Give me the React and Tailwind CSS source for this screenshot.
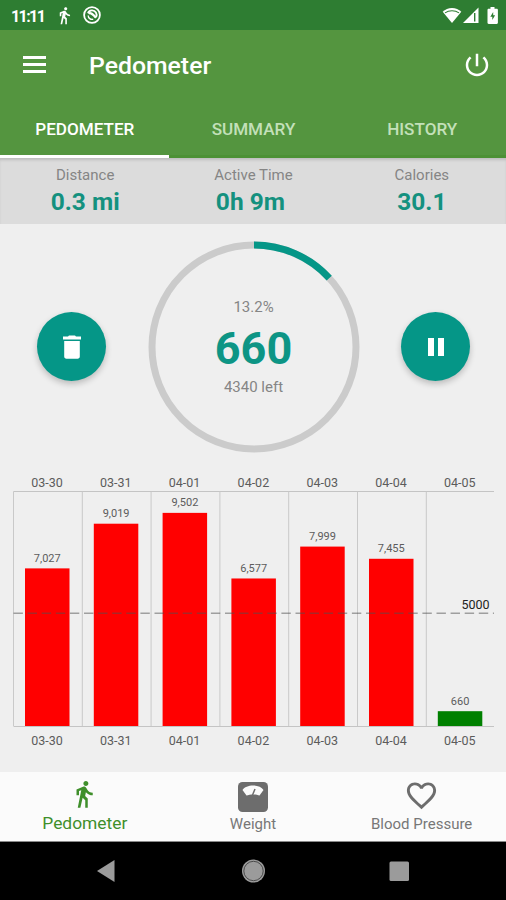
import { useState } from "react";

const tabs = ["PEDOMETER", "SUMMARY", "HISTORY"];

const stats = [
  { label: "Distance", value: "0.3 mi" },
  { label: "Active Time", value: "0h 9m " },
  { label: "Calories", value: "30.1" },
];

const days = [
  { date: "03-30", steps: 7027 },
  { date: "03-31", steps: 9019 },
  { date: "04-01", steps: 9502 },
  { date: "04-02", steps: 6577 },
  { date: "04-03", steps: 7999 },
  { date: "04-04", steps: 7455 },
  { date: "04-05", steps: 660 },
];

const GOAL = 5000;
const WALK =
  "M13.5 5.5c1.1 0 2-.9 2-2s-.9-2-2-2-2 .9-2 2 .9 2 2 2zM9.8 8.9L7 23h2.1l1.8-8 2.1 2v6h2v-7.5l-2.1-2 .6-3C14.8 12 16.8 13 19 13v-2c-1.9 0-3.5-1-4.3-2.4l-1-1.6c-.4-.6-1-1-1.7-1-.3 0-.5.1-.8.1L6 8.3V13h2V9.6l1.8-.7";

function Icon({ d, className }) {
  return (
    <svg viewBox="0 0 24 24" fill="currentColor" className={className}>
      <path d={d} />
    </svg>
  );
}

function StatusBar() {
  return (
    <div className="flex h-[30px] shrink-0 items-center bg-[#2e7d32] pl-[11px] pr-[7px] text-white">
      <span className="w-[44px] pt-[3px] text-[16px] font-bold tracking-[-1.6px]">11:11</span>
      <Icon d={WALK} className="h-[19px] w-[19px]" />
      <svg viewBox="0 0 18 18" className="ml-[9px] h-[18px] w-[18px]" fill="none" stroke="currentColor">
        <circle cx="9" cy="9" r="7.9" strokeWidth="1.8" />
        <path d="M5 7.300C6.200 3.700 11 3.400 12.900 6.500c.9 1.500.9 3.200.2 4.500" strokeWidth="1.900" />
        <path d="M5.200 9.500c0 2.700 2.500 4.300 5 3.700" strokeWidth="1.400" />
        <path d="M5.500 7.500c2.500-1.500 4.500 1 7.500 4.300" strokeWidth="2.200" />
      </svg>
      <div className="flex-1" />
      <svg viewBox="0 0 20 16" className="h-[16px] w-[20px]" fill="currentColor">
        <path d="M10 16L.7 4.7C3.2 2.4 6.4 1 10 1s6.800 1.400 9.300 3.700z" />
        <path d="M3 5.900C7 3 13 3 17 5.900" fill="none" stroke="#2e7d32" strokeWidth="1.100" />
      </svg>
      <svg viewBox="0 0 17 16" className="h-[16px] w-[17px]" fill="currentColor">
        <path d="M1 16L16.500.5V16z" />
        <path d="M12.700 6v8.500" stroke="#2e7d32" strokeWidth="1.400" />
      </svg>
      <svg viewBox="0 0 12 17" className="ml-[8px] h-[17px] w-[12px]" fill="currentColor">
        <path d="M3.500 0h4v1.700h2.200c.7 0 1.200.5 1.200 1.200v12.800c0 .7-.5 1.200-1.200 1.200H1.700c-.7 0-1.200-.5-1.200-1.200V2.900c0-.7.5-1.200 1.200-1.200h1.800z" />
        <path d="M6.200 5L3.300 9.700h2V13l2.800-4.700h-1.900z" fill="#2e7d32" />
      </svg>
    </div>
  );
}

function Header() {
  return (
    <div className="flex h-[70px] shrink-0 items-center bg-[#54953f] pl-[23px] pr-[14px] text-white">
      <div className="flex w-[23px] flex-col gap-[4px] pb-[1px]">
        <div className="h-[3px] bg-white" />
        <div className="h-[3px] bg-white" />
        <div className="h-[3px] bg-white" />
      </div>
      <div className="ml-[43px] flex-1 pt-[1px] text-[24.8px] font-medium">Pedometer</div>
      <Icon
        d="M13 3h-2v10h2V3zm4.830 2.170l-1.420 1.420C17.990 7.860 19 9.810 19 12c0 3.870-3.130 7-7 7s-7-3.130-7-7c0-2.190 1.010-4.140 2.580-5.420L6.170 5.170C4.230 6.820 3 9.260 3 12c0 4.970 4.030 9 9 9s9-4.030 9-9c0-2.740-1.230-5.180-3.170-6.830z"
        className="h-[30px] w-[30px]"
      />
    </div>
  );
}

function StepRing({ steps }) {
  const percent = (steps / GOAL) * 100;
  return (
    <div className="relative h-[212px] w-[212px]">
      <svg viewBox="0 0 212 212" className="h-full w-full -rotate-90" fill="none" strokeWidth="7">
        <circle cx="106" cy="106" r="102" stroke="#cbcbcb" />
        <circle
          cx="106"
          cy="106"
          r="102"
          stroke="#059687"
          pathLength="100"
          strokeDasharray={`${percent} 100`}
        />
      </svg>
      <div className="absolute inset-0 flex flex-col items-center justify-center pt-[1px] text-[#858585]">
        <div className="text-[15px] leading-[20px]">{percent.toFixed(1)}%</div>
        <div className="mb-[4px] mt-[8px] text-[45px] font-bold leading-[48px] text-[#0d9585]">{steps}</div>
        <div className="text-[15px] leading-[20px]">{GOAL - steps} left</div>
      </div>
    </div>
  );
}

function RoundButton({ children }) {
  return (
    <button className="flex h-[69px] w-[69px] items-center justify-center rounded-full bg-[#059687] text-white shadow-[0_3px_6px_rgba(0,0,0,0.22)]">
      {children}
    </button>
  );
}

function StepChart() {
  const left = 13.5;
  const step = 68.8;
  const top = 18.5;
  const bottom = 253;
  const scale = 0.02243;
  const goalY = bottom - GOAL * scale - 0.5;

  return (
    <svg width="506" height="299" viewBox="0 0 506 299" className="block shrink-0">
      <path d={`M${left} ${top}H494M${left} ${bottom + 0.5}H494`} stroke="#c4c4c4" />
      {days.map((day, i) => {
        const x = left + i * step;
        const y = bottom - day.steps * scale;
        return (
          <g key={day.date} textAnchor="middle" fill="#5c5c5c">
            <path d={`M${x} ${top}V${bottom}`} stroke="#c9c9c9" />
            <text x={x + 33.5} y="13.5" fontSize="12.5">{day.date}</text>
            <text x={x + 33.5} y="272" fontSize="12.5">{day.date}</text>
            <text x={x + 33.8} y={y - 6.5} fontSize="11">{day.steps.toLocaleString("en-US")}</text>
            <rect x={x + 11.5} y={y} width="44.5" height={bottom - y} fill={day.steps >= GOAL ? "#ff0000" : "#008000"} />
          </g>
        );
      })}
      <path d={`M${left} ${goalY}H494`} stroke="#505050" strokeOpacity="0.5" strokeWidth="1.5" strokeDasharray="9.4 4.7" />
      <text x="489.5" y="136" fontSize="12.5" textAnchor="end" fill="#222222">{GOAL}</text>
    </svg>
  );
}

function BottomNav() {
  return (
    <div className="grid h-[70px] shrink-0 grid-cols-3 border-b border-[#8a8a8a] bg-[#fbfbfb] text-[#777777]">
      <div className="flex flex-col items-center pt-[7px] text-[#3f8f2b]">
        <Icon d={WALK} className="h-[30px] w-[30px]" />
        <div className="pl-[1px] text-[17.4px] leading-[28px]">Pedometer</div>
      </div>
      <div className="flex flex-col items-center pt-[10px]">
        <svg viewBox="0 0 30 30" className="h-[30px] w-[30px]">
          <rect x="0" y="0" width="30" height="30" rx="4.5" fill="#6d6d6d" />
          <path d="M4.5 8C8 2 22 2 25.5 8L21.5 13.500C18 12 12 12 8.500 13.500z" fill="#fbfbfb" />
          <path d="M14.5 13L17 7" stroke="#6d6d6d" strokeWidth="1.5" />
        </svg>
        <div className="text-[15px] leading-[24px]">Weight</div>
      </div>
      <div className="flex flex-col items-center pt-[6px]">
        <Icon
          d="M16.500 3c-1.740 0-3.410.81-4.500 2.090C10.910 3.810 9.240 3 7.500 3 4.420 3 2 5.420 2 8.500c0 3.780 3.400 6.860 8.550 11.540L12 21.350l1.450-1.320C18.600 15.360 22 12.280 22 8.500 22 5.420 19.580 3 16.500 3zm-4.400 15.550l-.1.100-.1-.1C7.140 14.240 4 11.390 4 8.500 4 6.500 5.500 5 7.500 5c1.540 0 3.040.99 3.570 2.360h1.870C13.460 5.990 14.960 5 16.500 5c2 0 3.500 1.500 3.500 3.500 0 2.890-3.140 5.740-7.900 10.050z"
          className="h-[35px] w-[35px] text-[#6d6d6d]"
        />
        <div className="text-[15px] leading-[23px]">Blood Pressure</div>
      </div>
    </div>
  );
}

export default function App() {
  const [active, setActive] = useState("PEDOMETER");

  return (
    <div className="flex h-[900px] w-[506px] flex-col overflow-hidden bg-[#efefef] font-['Roboto',sans-serif]">
      <StatusBar />
      <Header />
      <div className="grid h-[58px] shrink-0 grid-cols-3 bg-[#54953f]">
        {tabs.map((tab) => (
          <button
            key={tab}
            onClick={() => setActive(tab)}
            className={
              tab === active
                ? "border-b-[3px] border-white pl-[1px] pt-[5px] text-[17.1px] font-medium text-white"
                : "border-b-[3px] border-[#4c9135] pl-[1px] pt-[5px] text-[17.1px] font-medium text-[#c3e0b9]"
            }
          >
            {tab}
          </button>
        ))}
      </div>
      <div className="grid h-[66px] shrink-0 grid-cols-3 bg-[#dcdcdc] pl-[1px] pt-[6px] text-center shadow-[inset_0_3px_3px_-1px_rgba(0,0,0,0.14)]">
        {stats.map((stat) => (
          <div key={stat.label}>
            <div className="text-[15px] leading-[22px] text-[#858585]">{stat.label}</div>
            <div className="whitespace-pre text-[24.5px] font-bold leading-[32px] text-[#14917f]">{stat.value}</div>
          </div>
        ))}
      </div>
      <div className="flex h-[249px] shrink-0 items-center justify-between pb-[4px] pl-[37px] pr-[36px]">
        <RoundButton>
          <svg viewBox="0 0 18 24" className="h-[24px] w-[18px]" fill="currentColor">
            <path d="M0 1.500h5L6 .5h6l1 1h5v3H0zM1.200 6h15.600v15.500c0 1.300-.9 2.200-2.200 2.200H3.400c-1.300 0-2.200-.9-2.200-2.200z" />
          </svg>
        </RoundButton>
        <StepRing steps={660} />
        <RoundButton>
          <div className="flex gap-[4px]">
            <div className="h-[18px] w-[6px] bg-white" />
            <div className="h-[18px] w-[6px] bg-white" />
          </div>
        </RoundButton>
      </div>
      <StepChart />
      <BottomNav />
      <div className="h-[58px] shrink-0 bg-black">
        <svg viewBox="0 0 506 58" className="h-full w-full" fill="#9b9b9b">
          <path d="M97 29L114.500 18v22z" />
          <circle cx="253.5" cy="29" r="11.5" />
          <circle cx="253.5" cy="29" r="9.7" fill="none" stroke="#4a4a4a" strokeWidth="1" />
          <rect x="389.5" y="19.500" width="19.500" height="19.500" rx="1.500" />
        </svg>
      </div>
    </div>
  );
}
